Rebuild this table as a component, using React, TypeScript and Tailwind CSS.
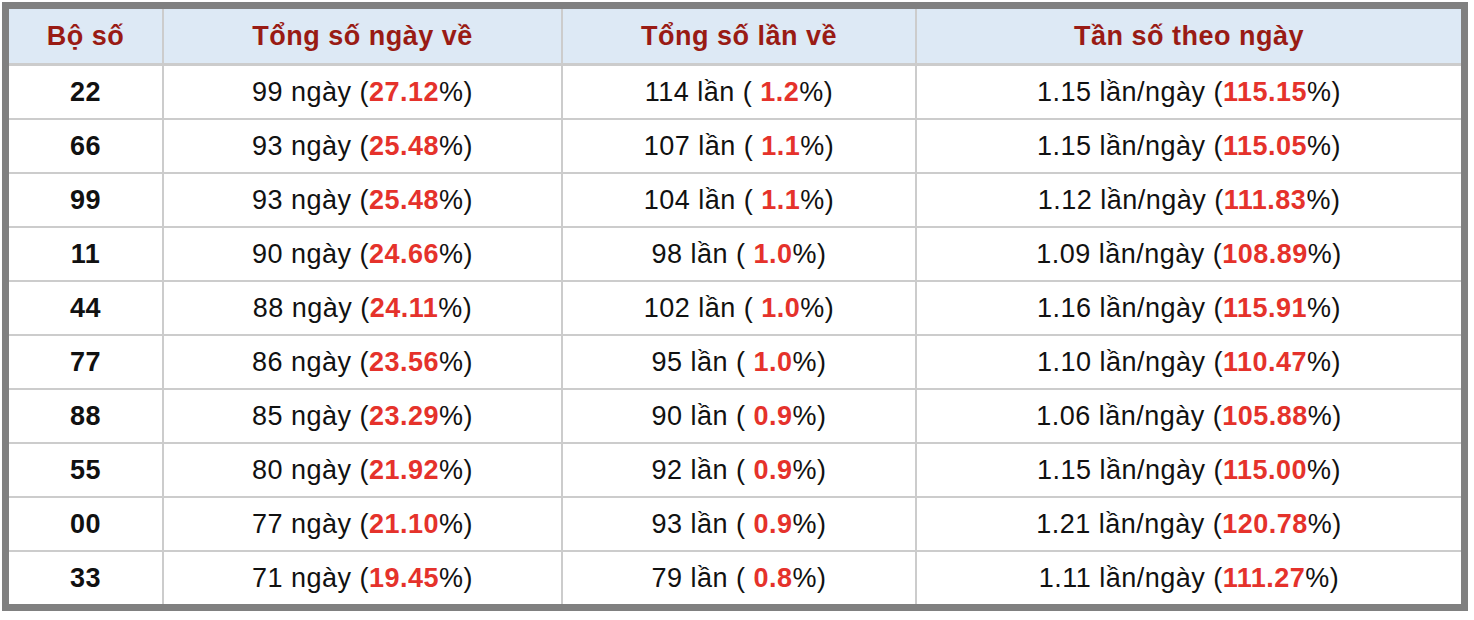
import React from "react";

type Row = {
  bo: string;
  ngay: string;
  ngayPct: string;
  lan: string;
  lanPct: string;
  tan: string;
  tanPct: string;
};

const rows: Row[] = [
  { bo: "22", ngay: "99", ngayPct: "27.12", lan: "114", lanPct: "1.2", tan: "1.15", tanPct: "115.15" },
  { bo: "66", ngay: "93", ngayPct: "25.48", lan: "107", lanPct: "1.1", tan: "1.15", tanPct: "115.05" },
  { bo: "99", ngay: "93", ngayPct: "25.48", lan: "104", lanPct: "1.1", tan: "1.12", tanPct: "111.83" },
  { bo: "11", ngay: "90", ngayPct: "24.66", lan: "98", lanPct: "1.0", tan: "1.09", tanPct: "108.89" },
  { bo: "44", ngay: "88", ngayPct: "24.11", lan: "102", lanPct: "1.0", tan: "1.16", tanPct: "115.91" },
  { bo: "77", ngay: "86", ngayPct: "23.56", lan: "95", lanPct: "1.0", tan: "1.10", tanPct: "110.47" },
  { bo: "88", ngay: "85", ngayPct: "23.29", lan: "90", lanPct: "0.9", tan: "1.06", tanPct: "105.88" },
  { bo: "55", ngay: "80", ngayPct: "21.92", lan: "92", lanPct: "0.9", tan: "1.15", tanPct: "115.00" },
  { bo: "00", ngay: "77", ngayPct: "21.10", lan: "93", lanPct: "0.9", tan: "1.21", tanPct: "120.78" },
  { bo: "33", ngay: "71", ngayPct: "19.45", lan: "79", lanPct: "0.8", tan: "1.11", tanPct: "111.27" },
];

const Red = ({ children }: { children: React.ReactNode }) => (
  <span className="font-bold text-[#e5322b]">{children}</span>
);

export default function App() {
  return (
    <div
      className="bg-white pl-[2px] pt-[2px] w-[1474px] h-[620px]"
      style={{ fontFamily: '"Liberation Sans", Arial, sans-serif' }}
    >
      <div className="w-[1466px] border-[7px] border-[#808080] bg-white">
        <div className="grid grid-cols-[155px_399px_354px_1fr] h-[57px] border-b-[3px] border-[#cccccc] bg-[#dde9f5] text-[27px] tracking-[0.5px] font-bold text-[#991b14]">
          <div className="flex items-center justify-center border-r-2 border-[#cccccc]">Bộ số</div>
          <div className="flex items-center justify-center border-r-2 border-[#cccccc]">Tổng số ngày về</div>
          <div className="flex items-center justify-center border-r-2 border-[#cccccc]">Tổng số lần về</div>
          <div className="flex items-center justify-center">Tần số theo ngày</div>
        </div>
        {rows.map((r, i) => (
          <div
            key={r.bo}
            className={
              "grid grid-cols-[155px_399px_354px_1fr] text-[27px] tracking-[0.5px] text-[#111111] " +
              (i < rows.length - 1 ? "h-[54px] border-b-2 border-[#cccccc]" : "h-[52px]")
            }
          >
            <div className="flex items-center justify-center border-r-2 border-[#cccccc] font-bold">{r.bo}</div>
            <div className="flex items-center justify-center border-r-2 border-[#cccccc] whitespace-pre">
              {r.ngay} ngày (<Red>{r.ngayPct}</Red>%)
            </div>
            <div className="flex items-center justify-center border-r-2 border-[#cccccc] whitespace-pre">
              {r.lan} lần ( <Red>{r.lanPct}</Red>%)
            </div>
            <div className="flex items-center justify-center whitespace-pre">
              {r.tan} lần/ngày (<Red>{r.tanPct}</Red>%)
            </div>
          </div>
        ))}
      </div>
    </div>
  );
}
